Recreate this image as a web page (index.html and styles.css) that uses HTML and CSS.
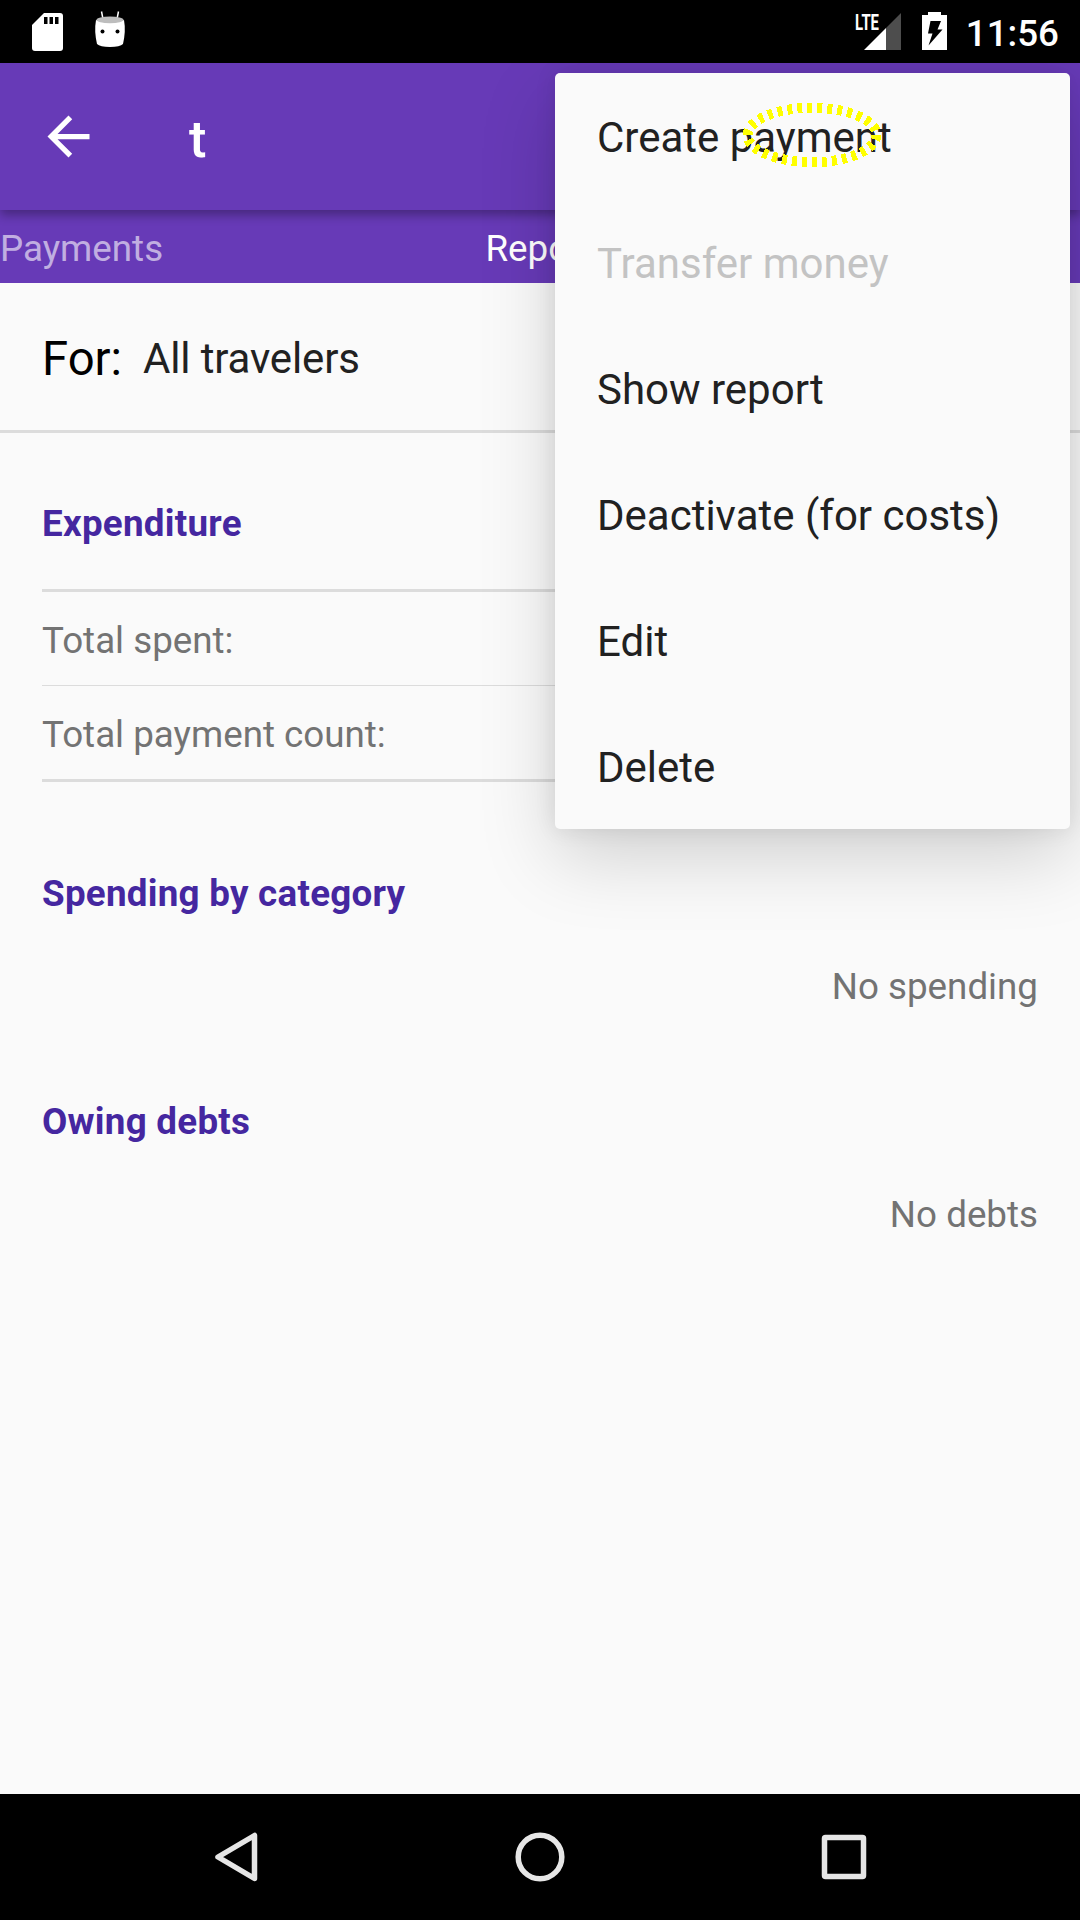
FILE: index.html
```html
<!DOCTYPE html>
<html lang="en">
<head>
<meta charset="utf-8">
<title>Report</title>
<link rel="stylesheet" href="styles.css">
</head>
<body>
<div class="screen">
  <header class="status">
    <div class="status-left">
      <svg class="icon-sd" width="31" height="38" viewBox="0 0 31 38"><path fill="#fff" d="M12 0H28Q31 0 31 3V35Q31 38 28 38H3Q0 38 0 35V12Z"/><path d="M12 4h3.500v7H12zM17.500 4h3.500v7h-3.500zM23 4h3.500v7H23z"/></svg>
      <svg class="icon-droid" width="32" height="37" viewBox="0 0 32 37"><path d="M7.500 .500L9 8M24.500 .500L23 8" stroke="#fff" stroke-width="1.500"/><path fill="#fff" d="M2 9Q16 14 30 9Q32 20 29 33Q26 36 16 36Q6 36 3 33Q0 20 2 9Z"/><ellipse cx="16" cy="8.800" rx="13.500" ry="3.400" fill="#bdbdbd"/><circle cx="8.500" cy="20.500" r="2"/><circle cx="23.500" cy="20.500" r="2"/></svg>
    </div>
    <div class="status-right">
      <svg class="icon-signal" width="50" height="38" viewBox="-4 0 50 38"><path fill="#4d4d4d" d="M46 0V37H31V15Z"/><path fill="#fff" d="M31 15V37H9Z"/><text class="lte" x="0" y="17" textLength="24" lengthAdjust="spacingAndGlyphs">LTE</text></svg>
      <svg class="icon-battery" width="25" height="38" viewBox="0 0 25 38"><path fill="#fff" d="M6 0H19V3H25V38H0V3H6Z"/><path d="M8.500 9H19L15.500 17.500H20.500L6.500 33.500L10.500 21.500H6Z"/></svg>
      <span class="clock">11:56</span>
    </div>
  </header>

  <div class="toolbar">
    <svg width="63" height="63" viewBox="0 0 24 24"><path fill="#fff" d="M20 11H7.830l5.590-5.590L12 4l-8 8 8 8 1.410-1.410L7.830 13H20z"/></svg>
    <h1>t</h1>
  </div>
  <nav class="tabs"><span>Payments</span><span class="active">Report</span><span></span></nav>

  <main>
    <div class="filter"><span class="filter-label">For:</span><span class="filter-value">All travelers</span></div>
    <section class="expenditure">
      <h2>Expenditure</h2>
      <div class="rows">
        <div class="row">Total spent:</div>
        <div class="row">Total payment count:</div>
      </div>
    </section>
    <section>
      <h2>Spending by category</h2>
      <p>No spending</p>
    </section>
    <section>
      <h2>Owing debts</h2>
      <p>No debts</p>
    </section>
  </main>

  <footer class="navbar">
    <svg width="50" height="54" viewBox="0 0 50 54"><path d="M8 27L44.500 5.500V48.500Z"/></svg>
    <svg width="54" height="54" viewBox="0 0 54 54"><circle cx="27" cy="27" r="21.800"/></svg>
    <svg width="50" height="54" viewBox="0 0 50 54"><rect x="5.500" y="7.500" width="39" height="39" rx="1"/></svg>
  </footer>

  <div class="menu-layer">
    <ul class="menu">
      <li>Create payment</li>
      <li class="disabled">Transfer money</li>
      <li>Show report</li>
      <li>Deactivate (for costs)</li>
      <li>Edit</li>
      <li>Delete</li>
    </ul>
    <svg class="marker" width="140" height="66" viewBox="0 0 140 66"><ellipse cx="70" cy="33" rx="64.500" ry="27.200"/></svg>
  </div>
</div>
</body>
</html>
```
FILE: styles.css
```css
* { box-sizing: border-box; }
body {
  margin: 0;
  background: #fafafa;
  font-family: Roboto, sans-serif;
  font-size: 36.75px;
}
h1, h2, p, ul { margin: 0; padding: 0; }
svg { display: block; flex: none; }
.screen {
  position: relative;
  width: 1080px;
  height: 1920px;
  display: flex;
  flex-direction: column;
  overflow: hidden;
}

.status {
  height: 63px;
  flex: none;
  display: flex;
  justify-content: space-between;
  padding: 0 21px 0 32px;
  background: #000;
  color: #fff;
}
.status-left, .status-right { display: flex; align-items: flex-start; }
.icon-sd { margin-top: 13px; }
.icon-droid { margin: 11px 0 0 31px; }
.icon-signal { margin-top: 13px; }
.icon-battery { margin: 12px 0 0 21px; }
.lte { font-size: 22px; font-weight: 700; fill: #fff; }
.clock { margin-left: 19px; font-weight: 500; line-height: 67px; }

.toolbar {
  height: 147px;
  flex: none;
  display: flex;
  align-items: center;
  padding-left: 37px;
  background: #673ab7;
  color: #fff;
  box-shadow: 0 5px 10px rgba(0, 0, 0, .32);
  z-index: 1;
}
.toolbar h1 {
  margin-left: 89px;
  padding-top: 4px;
  font-size: 52.5px;
  font-weight: 500;
}
.tabs {
  height: 73px;
  flex: none;
  display: grid;
  grid-template-columns: 1fr auto 1fr;
  align-items: center;
  padding-top: 4px;
  background: #673ab7;
  color: rgba(255, 255, 255, .6);
}
.tabs .active { color: #fff; }

main { flex: 1; }
.filter {
  height: 150px;
  display: flex;
  align-items: center;
  gap: 21px;
  padding: 4px 0 0 42px;
  border-bottom: 3px solid #dcdcdc;
}
.filter-label { font-size: 47.25px; color: #000; }
.filter-value { font-size: 42px; letter-spacing: -.15px; color: #212121; }
section {
  height: 228px;
  padding: 0 42px;
  color: #737373;
}
.expenditure { height: 391px; padding-top: 21px; }
h2 {
  padding-top: 48px;
  font-size: 36.75px;
  line-height: 44px;
  font-weight: 700;
  letter-spacing: .26px;
  color: #4527a0;
}
.rows {
  margin-top: 43px;
  border: solid #dcdcdc;
  border-width: 3px 0;
}
.row { height: 93px; padding-top: 4px; line-height: 89px; }
.row + .row { height: 94px; border-top: 1px solid #dcdcdc; }
section p { margin-top: 49px; line-height: 44px; text-align: right; }

.navbar {
  height: 126px;
  flex: none;
  display: flex;
  align-items: center;
  justify-content: space-between;
  padding: 0 211px 0 210px;
  background: #000;
}
.navbar svg {
  fill: none;
  stroke: #e6e6e6;
  stroke-width: 5.5;
  stroke-linejoin: round;
}

.menu-layer {
  position: absolute;
  inset: 63px 0 126px;
  overflow: hidden;
  z-index: 2;
}
.menu {
  position: absolute;
  top: 10px;
  right: 10px;
  width: 515px;
  border-radius: 5px;
  background: #fafafa;
  box-shadow: 0 28px 76px rgba(0, 0, 0, .17), 0 0 22px rgba(0, 0, 0, .09);
  color: #212121;
  font-size: 42px;
  list-style: none;
}
.menu li { height: 126px; padding: 3px 42px 0; line-height: 123px; }
.menu .disabled { color: #c3c3c3; }
.marker {
  position: absolute;
  left: 742px;
  top: 39px;
  fill: none;
  stroke: #ff0;
  stroke-width: 10;
  stroke-dasharray: 5 5;
  shape-rendering: crispEdges;
}
```
